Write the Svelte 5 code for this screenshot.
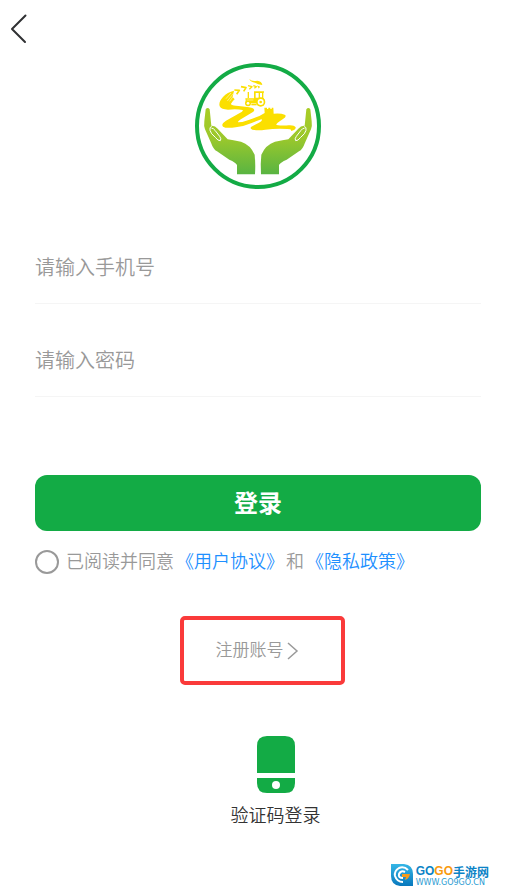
<script>
  let phone = $state('');
  let password = $state('');
  let agreed = $state(false);
</script>

{#snippet hand()}
  <path fill="url(#leaf)" d="M47 154Q53 146 59 154L64 203Q75 202 83 212L113 244Q128 247 153 251Q181 260 194 290Q197 316 195 349H141V321Q137 313 118 305L81 280Q70 274 63 254L45 214Q41 204 43 190Z" />
  <path d="M65 205Q58 207 60 217Q62 227 76 238Q84 249 91 248Q95 243 89 235L75 217Q71 211 64 210" fill="none" stroke="#fff" stroke-width="3" />
{/snippet}

<main>
  <header>
    <button class="back" type="button" aria-label="返回">
      <svg width="18" height="30" viewBox="0 0 18 30" fill="none" stroke="#303133" stroke-width="2" stroke-linecap="round" stroke-linejoin="round"><path d="M15.500 1.500 2 15 15 28" /></svg>
    </button>
  </header>

  <svg class="logo" viewBox="15 15 378 378" role="img" aria-label="双手托举农田">
    <defs>
      <linearGradient id="leaf" gradientUnits="userSpaceOnUse" x1="0" y1="150" x2="0" y2="350">
        <stop offset="0" stop-color="#a9cc25" />
        <stop offset=".45" stop-color="#9bc82c" />
        <stop offset="1" stop-color="#58b442" />
      </linearGradient>
    </defs>
    <circle cx="204" cy="204" r="183" fill="none" stroke="#13ab45" stroke-width="12" />
    <g>{@render hand()}</g>
    <g transform="translate(408 0) scale(-1 1)">{@render hand()}</g>
    <g fill="#fbdf00">
      <path d="M132 98Q112 102 99 117Q85 132 89 145Q94 155 114 155Q139 152 158 156Q161 160 148 166L108 188Q92 198 99 206Q108 212 137 208Q165 204 185 195L214 184Q220 187 207 194L184 206Q178 212 187 215Q205 218 226 215Q258 211 292 213Q307 213 302 219Q318 216 317 208Q313 201 296 202Q278 204 259 201Q258 196 279 183Q292 174 284 170Q272 165 251 167L250 149H245V153H241V149H235V153H231V149H223L224 165Q210 175 178 185Q158 193 144 193Q143 189 155 182L190 161Q197 155 187 150Q169 145 138 143Q121 142 123 137Q126 131 134 124L128 117Z" />
      <path d="M178 63Q186 72 202 68Q215 69 217 81Q204 79 195 74Q182 73 178 63Z" />
      <path d="M173 102H177V120H173Z" />
      <path d="M166 121H192V100H222V104H220V119Q226 124 225 136H168ZM197 105V119H206V105ZM210 105V119H216V105Z" fill-rule="evenodd" />
      <circle cx="174" cy="136" r="9" />
      <circle cx="212" cy="132" r="14" />
      <path d="M184 137H200V142H184Z" />
    </g>
    <g fill="none" stroke="#fbdf00" stroke-linejoin="round">
      <path stroke-width="5" d="M133 96 148 97 140 109M153 86 168 89 161 100" />
      <path stroke-width="4" d="M174 83 186 86 178 94M190 83 199 86 193 91" />
      <path stroke-width="3" d="M202 84 209 87 204 90" />
    </g>
    <g fill="#fff">
      <circle cx="174" cy="136" r="4" />
      <circle cx="212" cy="132" r="9" />
    </g>
    <circle cx="212" cy="132" r="4" fill="#fbdf00" />
    <path d="M108 122 123 105M112 129 130 107M119 130 129 116M170 126H190" fill="none" stroke="#fff" stroke-width="1.500" />
  </svg>

  <form onsubmit={(e) => e.preventDefault()}>
    <input class="field" type="tel" aria-label="手机号" placeholder="请输入手机号" bind:value={phone} />
    <input class="field" type="password" aria-label="密码" placeholder="请输入密码" bind:value={password} />
    <button class="login" type="submit">登录</button>
    <div class="agree">
      <input id="agree" type="checkbox" bind:checked={agreed} />
      <label for="agree">已阅读并同意</label>
      <a href="#terms">《用户协议》</a>
      <span>和</span>
      <a href="#privacy">《隐私政策》</a>
    </div>
  </form>

  <a class="register" href="#register">
    <span>注册账号</span>
    <svg width="12" height="20" viewBox="0 0 12 20" fill="none" stroke="#999" stroke-width="1.500"><path d="M1 2 10 10 1 18" /></svg>
  </a>

  <button class="code" type="button">
    <svg width="38" height="58" viewBox="0 0 38 58">
      <path fill="#13ab45" d="M10 0H28Q38 0 38 10V37H0V10Q0 0 10 0ZM0 42H38V47Q38 57 28 57H10Q0 57 0 47Z" />
      <circle cx="19" cy="49" r="4" fill="#fff" />
    </svg>
    验证码登录
  </button>

  <footer>
    <svg width="24" height="24" viewBox="0 0 24 24" aria-hidden="true">
      <defs>
        <linearGradient id="drop" x1="0" y1="0" x2="0" y2="1">
          <stop offset="0" stop-color="#35b6e6" />
          <stop offset="1" stop-color="#0878bd" />
        </linearGradient>
      </defs>
      <path fill="url(#drop)" d="M1 1H14Q23 2 23 11V23H10Q1 22 1 13Z" />
      <path fill="none" stroke="#fff" stroke-width="2" d="M18 7Q14 3 9 5 4 8 5 13 7 19 13 19" />
      <path fill="none" stroke="#fff" stroke-width="2" d="M15 9Q11 7 9 11 8 15 13 15" />
      <path fill="#f79a19" d="M12 11H20Q19 16 15 17L16 14H12Z" />
    </svg>
    <div class="mark">
      <div class="name"><span class="blue">GO</span><span class="orange">GO</span><span class="cjk">手游网</span></div>
      <div class="site">WWW.GO9GO.CN</div>
    </div>
  </footer>
</main>

<style>
  :global(body) {
    margin: 0;
    background: #fff;
  }
  main {
    box-sizing: border-box;
    min-height: 100vh;
    display: flex;
    flex-direction: column;
    align-items: center;
    font-family: "Noto Sans CJK SC", sans-serif;
    font-weight: 350;
    color: #333;
  }
  button,
  input {
    font: inherit;
    color: inherit;
    border: 0;
    padding: 0;
    background: none;
  }
  svg {
    display: block;
    flex: none;
  }
  header {
    align-self: stretch;
    padding: 14px 10px 0;
  }
  .back {
    display: block;
  }
  .logo {
    width: 126px;
    height: 126px;
    margin-top: 19px;
  }
  form {
    align-self: stretch;
    display: flex;
    flex-direction: column;
    margin: 42px 34px 0 35px;
  }
  .field {
    box-sizing: border-box;
    height: 73px;
    padding-bottom: 2px;
    border-bottom: 1px solid #f5f5f5;
    border-radius: 0;
    font-size: 20px;
    outline: none;
  }
  .field + .field {
    margin-top: 20px;
  }
  .field::placeholder {
    color: #999;
    opacity: 1;
  }
  .login {
    height: 56px;
    margin-top: 78px;
    padding-bottom: 4px;
    border-radius: 12px;
    background: #13ab45;
    color: #fff;
    font-size: 24px;
    font-weight: 700;
  }
  .agree {
    display: flex;
    align-items: center;
    gap: 2px;
    margin-top: 19px;
    font-size: 18px;
    line-height: 20px;
    color: #999;
    white-space: nowrap;
  }
  .agree label,
  .agree a,
  .agree span,
  .register span {
    padding-bottom: 4px;
  }
  .agree input {
    appearance: none;
    box-sizing: border-box;
    width: 24px;
    height: 24px;
    margin: 0 5px 0 0;
    border: 2px solid #999;
    border-radius: 50%;
  }
  .agree input:checked {
    background: #13ab45;
    border-color: #13ab45;
  }
  a {
    color: #1e90ff;
    text-decoration: none;
  }
  .register {
    box-sizing: border-box;
    display: flex;
    align-items: center;
    gap: 3px;
    height: 69px;
    margin: 42px 0 0 9px;
    padding: 0 42px 0 32px;
    border: 4px solid #fa3a3a;
    border-radius: 5px;
    font-size: 17px;
    color: #999;
  }
  .code {
    display: flex;
    flex-direction: column;
    align-items: center;
    gap: 8px;
    margin: 51px 0 0 36px;
    font-size: 18px;
    line-height: 24px;
  }
  footer {
    align-self: flex-end;
    display: flex;
    align-items: center;
    gap: 2px;
    margin: auto 26px 9px 0;
  }
  .name {
    display: flex;
    align-items: center;
    height: 16px;
    font-family: "Liberation Sans", sans-serif;
    font-size: 12px;
    font-weight: 700;
  }
  .blue,
  .cjk {
    color: #0c83c6;
  }
  .orange {
    color: #f99a10;
  }
  .cjk {
    font-family: "Noto Sans CJK SC", sans-serif;
  }
  .site {
    font-family: "DejaVu Sans", sans-serif;
    font-size: 8px;
    font-weight: 400;
    line-height: 8px;
    color: #2a9bd2;
  }
</style>
